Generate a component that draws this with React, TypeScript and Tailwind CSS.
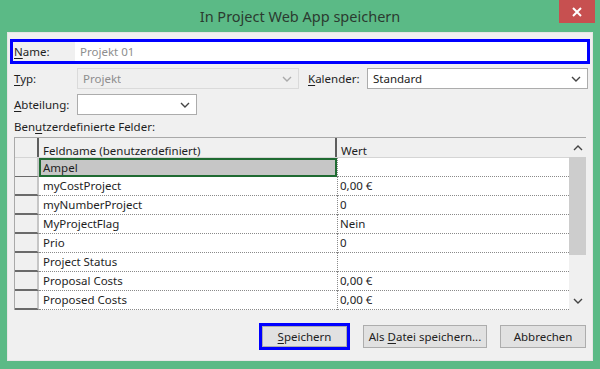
import { ReactNode } from 'react'

const font = { fontFamily: '"Segoe UI", "Noto Sans", "Open Sans", sans-serif' }

const rows: { name: string; value: string }[] = [
  { name: 'Ampel', value: '' },
  { name: 'myCostProject', value: '0,00 €' },
  { name: 'myNumberProject', value: '0' },
  { name: 'MyProjectFlag', value: 'Nein' },
  { name: 'Prio', value: '0' },
  { name: 'Project Status', value: '' },
  { name: 'Proposal Costs', value: '0,00 €' },
  { name: 'Proposed Costs', value: '0,00 €' },
]

function Chevron({ up = false, className = '' }: { up?: boolean; className?: string }) {
  return (
    <svg width="10" height="6" viewBox="0 0 10 6" className={className}>
      <path
        d={up ? 'M1 5 L5 1 L9 5' : 'M1 1 L5 5 L9 1'}
        fill="none"
        stroke="#444"
        strokeWidth="1.4"
      />
    </svg>
  )
}

function Combo({ children, width, disabled = false }: { children?: ReactNode; width: string; disabled?: boolean }) {
  return (
    <div
      className={`${width} h-[21px] flex items-center justify-between pl-[5px] pr-[6px] border ${
        disabled ? 'bg-[#efefef] border-[#dadada] text-[#8d8d8d]' : 'bg-white border-[#acacac] text-[#222]'
      }`}
    >
      <span className="truncate">{children}</span>
      <Chevron className={disabled ? 'opacity-40' : ''} />
    </div>
  )
}

function U({ children }: { children: ReactNode }) {
  return <span className="underline underline-offset-2">{children}</span>
}

function Button({ children, width }: { children: ReactNode; width: string }) {
  return (
    <div
      className={`${width} h-[23px] flex items-center justify-center bg-[#e1e1e1] border border-[#adadad] text-[#222]`}
    >
      <span>{children}</span>
    </div>
  )
}

export default function App() {
  return (
    <div style={font} className="w-[600px] h-[369px] bg-[#5bba86] flex flex-col text-[11.5px] text-[#1e1e1e] select-none">
      <div className="h-[32px] relative flex items-center justify-center">
        <span className="text-[14.5px] text-[#2b3a30] pt-[2px]">In Project Web App speichern</span>
        <div className="absolute right-[5px] top-0 w-[36px] h-[23px] bg-[#c75050] flex items-center justify-center">
          <svg width="10" height="10" viewBox="0 0 10 10">
            <path d="M1 1 L9 9 M9 1 L1 9" stroke="#fff" strokeWidth="2" />
          </svg>
        </div>
      </div>

      <div className="mx-[7px] h-[329px] bg-[#f0f0f0] border border-[#e6e6e6] flex flex-col">
        {/* Name */}
        <div className="mt-[6px] ml-[2px] w-[580px] h-[25px] border-[3px] border-[#0000ff] flex">
          <div className="w-[62px] pl-[1px] flex items-center">
            <span>
              <U>N</U>ame:
            </span>
          </div>
          <div className="flex-1 bg-white flex items-center pl-[5px] text-[#8e8e8e]">Projekt 01</div>
        </div>

        {/* Typ / Kalender */}
        <div className="mt-[4px] flex items-center h-[21px]">
          <div className="w-[69px] pl-[6px]">
            <U>T</U>yp:
          </div>
          <Combo width="w-[222px]" disabled>
            Projekt
          </Combo>
          <div className="w-[68px] pl-[9px]">
            <U>K</U>alender:
          </div>
          <Combo width="w-[221px]">Standard</Combo>
        </div>

        {/* Abteilung */}
        <div className="mt-[5px] flex items-center h-[21px]">
          <div className="w-[69px] pl-[6px]">
            <U>A</U>bteilung:
          </div>
          <Combo width="w-[120px]" />
        </div>

        <div className="mt-[4px] pl-[6px] h-[16px] leading-[16px]">
          Ben<U>u</U>tzerdefinierte Felder:
        </div>

        {/* Table */}
        <div className="mt-[2px] ml-[6px] w-[572px] h-[173px] border-t border-l border-[#a9a9a9] flex bg-white">
          <div className="flex-1 flex flex-col">
            <div className="h-[20px] flex bg-[#f0f0f0] border-b border-[#d5d5d5]">
              <div className="w-[24px] border-r-2 border-[#5e5e5e]" />
              <div className="w-[298px] pl-[4px] pt-[4px] border-r-2 border-[#5e5e5e]">Feldname (benutzerdefiniert)</div>
              <div className="flex-1 pl-[4px] pt-[4px]">Wert</div>
            </div>
            {rows.map((r, i) => (
              <div key={r.name} className="h-[19px] flex">
                <div
                  className={`w-[24px] bg-[#f0f0f0] border-r-2 border-r-[#c6c6c6] ${
                    i === 0 ? 'border-b border-b-[#6a6a6a]' : 'border-b-2 border-b-[#6a6a6a]'
                  }`}
                />
                {i === 0 ? (
                  <div className="w-[298px] bg-[#c6c6c6] border-2 border-[#1f6b32] pl-[2px] flex items-center">
                    {r.name}
                  </div>
                ) : (
                  <div className="w-[298px] pl-[4px] flex items-center border-b border-dotted border-[#8a8a8a]">
                    {r.name}
                  </div>
                )}
                <div className="flex-1 pl-[2px] flex items-center border-l border-dotted border-[#8a8a8a] border-b">
                  {r.value}
                </div>
              </div>
            ))}
          </div>
          {/* Scrollbar */}
          <div className="w-[17px] bg-[#f0f0f0] flex flex-col items-center">
            <div className="h-[19px] flex items-center justify-center">
              <Chevron up />
            </div>
            <div className="w-[17px] h-[98px] bg-[#cdcdcd]" />
            <div className="flex-1" />
            <div className="h-[19px] flex items-center justify-center">
              <Chevron />
            </div>
          </div>
        </div>

        {/* Buttons */}
        <div className="mt-[13px] flex items-center justify-end pr-[6px] gap-[13px]">
          <div className="w-[91px] h-[27px] border-[3px] border-[#0000ff] flex">
            <div className="flex-1 bg-[#e1e1e1] border border-[#adadad] flex items-center justify-center">
              <span>
                <U>S</U>peichern
              </span>
            </div>
          </div>
          <Button width="w-[124px]">
            Als <U>D</U>atei speichern...
          </Button>
          <Button width="w-[86px]">Abbrechen</Button>
        </div>
      </div>
    </div>
  )
}
